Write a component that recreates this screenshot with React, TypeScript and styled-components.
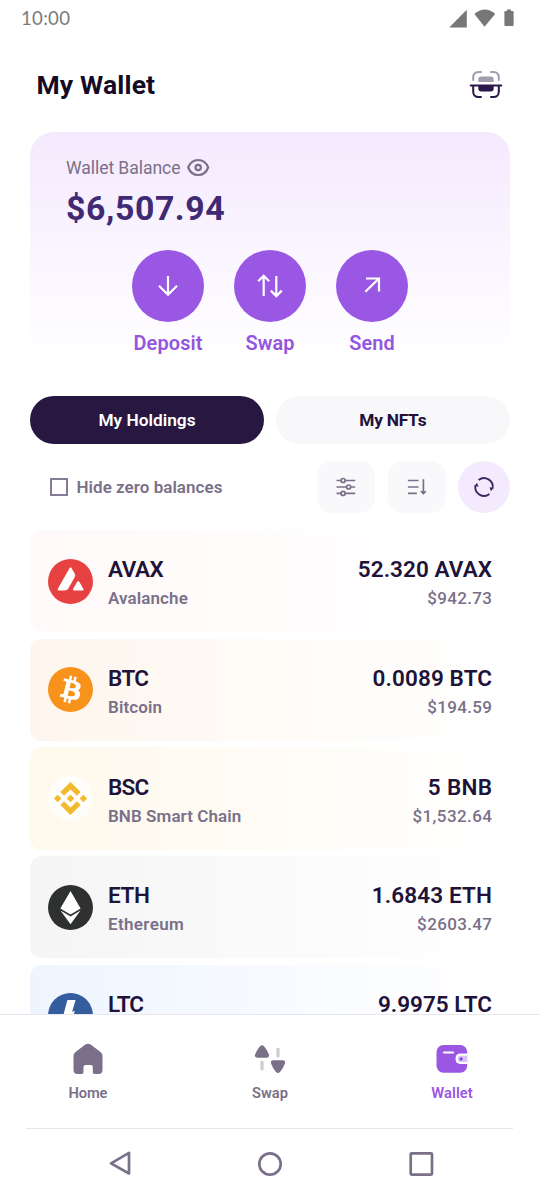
import React from "react";
import styled, { createGlobalStyle } from "styled-components";

const ink = "#201239";
const muted = "#7a7089";
const purple = "#9957e4";

const GlobalStyle = createGlobalStyle`
  * { box-sizing: border-box; }
  body { margin: 0; background: #fff; font-family: Roboto, "Liberation Sans", sans-serif; }
  button { font: inherit; border: 0; padding: 0; margin: 0; background: none; }
  svg { display: block; flex: none; overflow: visible; }
`;

const Text = styled.span<{ $size: number; $weight?: number; $color?: string; $track?: number; $line?: number }>`
  display: block;
  white-space: nowrap;
  font-size: ${(p) => p.$size}px;
  font-weight: ${(p) => p.$weight ?? 700};
  color: ${(p) => p.$color ?? ink};
  letter-spacing: ${(p) => p.$track ?? 0}px;
  margin-right: ${(p) => -(p.$track ?? 0)}px;
  line-height: ${(p) => p.$line ?? 28}px;
`;

const Screen = styled.div`
  width: 540px;
  height: 1200px;
  display: flex;
  flex-direction: column;
  overflow: hidden;
  background: #fff;
`;

const StatusBar = styled.div`
  height: 37px;
  flex: none;
  display: flex;
  justify-content: space-between;
  align-items: center;
  padding: 0 26px 0 21px;
`;

const Clock = styled.span`
  font-family: Lato, sans-serif;
  font-size: 18.6px;
  line-height: 37px;
  letter-spacing: 0.3px;
  color: #7b7b7b;
`;

const Header = styled.header`
  flex: none;
  height: 95px;
  display: flex;
  justify-content: space-between;
  align-items: center;
  padding: 0 37px 0 36.5px;
`;

const Title = styled(Text)`
  margin-top: 0;
  margin-bottom: 0;
`;

const Content = styled.main`
  flex: 1;
  min-height: 0;
  overflow: hidden;
  padding: 0 30px;
`;

const BalanceCard = styled.section`
  height: 240px;
  border-radius: 24px;
  background: linear-gradient(180deg, #f4e9fe 0%, #faf5ff 50%, #ffffff 98%);
  padding: 22px 36px 0;
`;

const BalanceLabel = styled.div`
  display: flex;
  align-items: center;
  gap: 5px;
`;

const Actions = styled.div`
  display: flex;
  justify-content: center;
  gap: 30px;
  margin-top: 14px;
`;

const Action = styled.div`
  width: 72px;
  display: flex;
  flex-direction: column;
  align-items: center;
  gap: 7.5px;
`;

const ActionCircle = styled.button`
  width: 72px;
  height: 72px;
  border-radius: 50%;
  background: ${purple};
`;

const Tabs = styled.div`
  display: flex;
  gap: 12px;
  margin-top: 24px;
`;

const Tab = styled.button<{ $active?: boolean }>`
  flex: 1;
  height: 48px;
  border-radius: 24px;
  display: flex;
  justify-content: center;
  align-items: center;
  background: ${(p) => (p.$active ? "#281740" : "#f8f8fb")};
`;

const Toolbar = styled.div`
  display: flex;
  align-items: center;
  gap: 12.5px;
  height: 52px;
  margin: 17px 0;
`;

const HideToggle = styled.label`
  flex: 1;
  display: flex;
  align-items: center;
  gap: 8.5px;
  padding-left: 20px;
`;

const Checkbox = styled.span`
  width: 18px;
  height: 18px;
  border: 2px solid #857b94;
`;

const ToolButton = styled.button<{ $round?: boolean }>`
  width: ${(p) => (p.$round ? 52 : 58)}px;
  height: 52px;
  border-radius: ${(p) => (p.$round ? "50%" : "15px")};
  background: ${(p) => (p.$round ? "#f3ebfd" : "#f9f9fb")};
`;

const HoldingList = styled.div`
  display: flex;
  flex-direction: column;
  gap: 6.5px;
`;

const HoldingRow = styled.div<{ $tint: string }>`
  height: 102.2px;
  flex: none;
  border-radius: 12px;
  background: linear-gradient(90deg, ${(p) => p.$tint} 0%, #ffffff 96%);
  display: flex;
  align-items: center;
  padding: 0 18px;
`;

const Names = styled.div`
  flex: 1;
  padding: 6.4px 0 0 15px;
`;

const Amounts = styled.div`
  padding-top: 6.4px;
  display: flex;
  flex-direction: column;
  align-items: flex-end;
`;

const BottomNav = styled.nav`
  flex: none;
  height: 114px;
  border-top: 1px solid #e8e7ee;
  display: flex;
  justify-content: space-between;
  padding: 25px 48px 0;
`;

const NavItem = styled.div`
  width: 80px;
  display: flex;
  flex-direction: column;
  align-items: center;
  gap: 1px;
`;

const SystemBar = styled.div`
  flex: none;
  height: 72px;
  margin: 0 27px 0 26px;
  border-top: 1px solid #e6e5e9;
  display: flex;
  justify-content: space-between;
  padding: 19px 79px 0 80px;
`;

const StatusIcons = () => (
  <svg width="66" height="20" viewBox="448 8.500 66 20" fill="#777">
    <path d="M466.8 9.3V27H449.2z" />
    <path d="M474.4 13.6C480.4 7.6 489.4 7.6 495.2 13.6L484.5 26.2z" />
    <path d="M507 9h4v1.4h1.6q1 0 1 1V24.6q0 1-1 1h-7.2q-1 0-1-1V11.4q0-1 1-1H507z" />
  </svg>
);

const ScanIcon = () => (
  <svg width="34" height="28" viewBox="469 70.600 34 28" fill="none" strokeWidth="2" strokeLinecap="round">
    <path d="M473.2 79.5V77q0-5.5 5.5-5.5h2.3M498.8 79.5V77q0-5.500-5.500-5.500H491" stroke="#a29caf" />
    <path d="M478.3 81.700V79q0-3 3-3h9.400q3 0 3 3v2.700z" fill="#a29caf" />
    <path d="M478.3 85V88q0 3 3 3h9.400q3 0 3-3V85z" fill="#2b1748" />
    <path d="M470.7 85.200h30.600M473.200 86V91q0 5.600 5.500 5.600h2.300M498.800 86V91q0 5.600-5.500 5.600H491" stroke="#2b1748" />
  </svg>
);

const EyeIcon = () => (
  <svg width="24" height="20" viewBox="186 158 24 20" fill="none" stroke={muted} strokeWidth="2.2">
    <path d="M188.2 167.5C190 163 193.8 160 198.2 160s8.200 3 10 7.500C206.400 172 202.600 175 198.200 175S190 172 188.200 167.500z" strokeLinejoin="round" />
    <circle cx="198.200" cy="167.500" r="2.700" />
  </svg>
);

const actionPaths: Record<string, string> = {
  Deposit: "M36 26v18.600M27 35.800l9 9 9-9",
  Swap: "M29.700 46V26M24.200 31.200L29.700 25.700l5.500 5.500M42.300 26v20M36.800 40.600l5.500 5.500 5.500-5.500",
  Send: "M30 28.500H43V41.500M42.800 28.700L29.300 41.800",
};

const ActionIcon = ({ name }: { name: string }) => (
  <svg width="72" height="72" viewBox="0 0 72 72" fill="none" stroke="#fff" strokeWidth="2.200">
    <path d={actionPaths[name]} />
  </svg>
);

const ToolSvg = styled.svg`
  margin: 0 auto;
`;

const FilterIcon = () => (
  <ToolSvg width="20" height="20" viewBox="0 0 20 20" fill="none" stroke={muted} strokeWidth="1.700">
    <path d="M.5 3.500H5M9.200 3.500H19.200M.5 10H10.500M14.700 10h4.500M.5 16.400H5M9.200 16.400H19.200" />
    <circle cx="7.100" cy="3.500" r="2" />
    <circle cx="12.600" cy="10" r="2" />
    <circle cx="7.100" cy="16.400" r="2" />
  </ToolSvg>
);

const SortIcon = () => (
  <ToolSvg width="20" height="20" viewBox="0 0 20 20" fill="none" stroke={muted} strokeWidth="1.700">
    <path d="M.9 3.500h10.600M.9 10h10.600M.9 16.400H9.900M16.400 2.300V15" />
    <path d="M13.700 14.500h5.400L16.400 17.400z" fill={muted} strokeWidth="0.800" strokeLinejoin="round" />
  </ToolSvg>
);

const RefreshIcon = () => (
  <ToolSvg width="20" height="20" viewBox="0 0 20 20" fill="none" stroke="#3d2765" strokeWidth="1.900">
    <path d="M4.600 3.100A8.700 8.700 0 0 1 18.600 11.500M15.400 16.900A8.700 8.700 0 0 1 1.400 8.500" />
    <path d="M15.400 10.200l4.100.9-2.500 3.200zM4.600 9.800L.5 8.900 3 5.700z" fill="#3d2765" stroke="none" />
  </ToolSvg>
);

const AvaxLogo = () => (
  <svg width="45" height="45" viewBox="0 0 1503 1503">
    <circle cx="751.500" cy="751.500" r="751.500" fill="#e84142" />
    <path
      fill="#fff"
      d="M538.688 1050.86H392.94C362.314 1050.86 347.186 1050.86 337.962 1044.96C327.999 1038.5 321.911 1027.8 321.173 1015.99C320.619 1005.11 328.184 991.822 343.312 965.255L703.182 330.935C718.495 303.999 726.243 290.531 736.021 285.55C746.537 280.2 759.083 280.2 769.599 285.55C779.377 290.531 787.126 303.999 802.438 330.935L876.42 460.079L876.797 460.738C893.336 489.635 901.723 504.289 905.385 519.669C909.443 536.458 909.443 554.169 905.385 570.958C901.695 586.455 893.393 601.215 876.604 630.549L687.573 964.702L687.084 965.558C670.436 994.693 661.999 1009.46 650.306 1020.6C637.576 1032.78 622.263 1041.63 605.474 1046.62C590.161 1050.86 573.004 1050.86 538.688 1050.86ZM906.75 1050.86H1115.59C1146.4 1050.86 1161.9 1050.86 1171.13 1044.78C1181.09 1038.32 1187.36 1027.43 1187.92 1015.63C1188.45 1005.1 1181.05 992.33 1166.55 967.307L1165.04 964.706L1060.43 785.75L1059.24 783.735C1044.54 758.877 1037.12 746.324 1027.59 741.472C1017.08 736.121 1004.71 736.121 994.199 741.472C984.605 746.453 976.857 759.552 961.544 785.934L857.306 964.891L856.949 965.507C841.69 991.847 834.064 1005.01 834.614 1015.81C835.352 1027.62 841.44 1038.5 851.402 1044.96C860.443 1050.86 875.94 1050.86 906.75 1050.86Z"
    />
  </svg>
);

const BtcLogo = () => (
  <svg width="45" height="45" viewBox="0 0 32 32">
    <circle cx="16" cy="16" r="16" fill="#f7931a" />
    <path
      fill="#fff"
      d="M23.189 14.02c.314-2.096-1.283-3.223-3.465-3.975l.708-2.84-1.728-.43-.69 2.765c-.454-.114-.92-.22-1.385-.326l.695-2.783L15.596 6l-.708 2.839c-.376-.086-.746-.17-1.104-.26l.002-.009-2.384-.595-.46 1.846s1.283.294 1.256.312c.7.175.826.638.805 1.006l-.806 3.235c.048.012.11.03.18.057l-.183-.045-1.13 4.532c-.086.212-.303.531-.793.41.018.025-1.256-.313-1.256-.313l-.858 1.978 2.25.561c.418.105.828.215 1.231.318l-.715 2.872 1.727.43.708-2.84c.472.127.93.245 1.378.357l-.706 2.828 1.728.43.715-2.866c2.948.558 5.164.333 6.097-2.333.752-2.146-.037-3.385-1.588-4.192 1.13-.26 1.98-1.003 2.207-2.538zm-3.95 5.538c-.533 2.147-4.148.986-5.32.695l.95-3.805c1.172.293 4.929.872 4.37 3.11zm.535-5.569c-.487 1.953-3.495.96-4.47.717l.86-3.45c.975.243 4.118.696 3.61 2.733z"
    />
  </svg>
);

const BnbLogo = () => (
  <svg width="45" height="45" viewBox="0 0 32 32">
    <circle cx="16" cy="16" r="16" fill="#fffefb" />
    <path
      fill="#f3ba2f"
      transform="translate(-2.880 -2.880) scale(1.180)"
      d="M12.116 14.404L16 10.520l3.886 3.886 2.260-2.260L16 6l-6.144 6.144 2.260 2.260zM6 16l2.260-2.260L10.520 16l-2.260 2.260L6 16zm6.116 1.596L16 21.480l3.886-3.886 2.260 2.259L16 26l-6.144-6.144-.003-.003 2.263-2.257zM21.480 16l2.260-2.260L26 16l-2.260 2.260L21.480 16zM18.294 16L16 18.294 13.705 16 16 13.706z"
    />
  </svg>
);

const EthLogo = () => (
  <svg width="45" height="45" viewBox="0 0 45 45">
    <circle cx="22.500" cy="22.500" r="22.500" fill="#2f3030" />
    <path fill="#fff" d="M22.500 6L32.600 23.400 22.500 29.500 12.300 23.400zM12.500 25.400L22.500 31.500 32.500 25.400 22.500 39.300z" />
  </svg>
);

const LtcLogo = () => (
  <svg width="45" height="45" viewBox="0 0 32 32">
    <circle cx="16" cy="16" r="16" fill="#345d9d" />
    <path
      fill="#fff"
      transform="translate(-4.300 -5.800) scale(1.350)"
      d="M10.427 19.214L9 19.768l.688-2.759 1.444-.58L13.413 8h4.300l-1.819 6.196 1.410-.571-.68 2.750-1.427.571-.848 3.483H23L22.127 24H9.252z"
    />
  </svg>
);

const HomeIcon = () => (
  <svg width="40" height="38" viewBox="68.500 1040 40 38" fill={muted}>
    <path d="M85.500 1044.800q3-2.200 6 0l9.500 7.200q2 1.600 2 4V1070q0 4-4 4H95q-1.700 0-1.700-1.700V1067q0-2-2-2H86q-2 0-2 2v5.300q0 1.700-1.700 1.700H78q-4 0-4-4v-14q0-2.400 2-4z" />
  </svg>
);

const SwapNavIcon = () => (
  <svg width="40" height="38" viewBox="250 1040 40 38" fill={muted}>
    <path d="M259.800 1046.600q2.200-2.600 4.400 0 3 3.400 4.700 8 .8 3-2.200 3.100h-9.400q-3-.1-2.200-3.100 1.700-4.600 4.700-8z" />
    <path d="M275.800 1071.700q2.200 2.400 4.400 0 3-3.400 4.700-8.300.8-3-2.200-3.100h-9.400q-3 .1-2.200 3.100 1.700 4.900 4.700 8.300z" />
    <path d="M262 1062V1069M278 1049V1056" stroke="#cfcbd5" strokeWidth="3.200" strokeLinecap="round" />
  </svg>
);

const WalletIcon = () => (
  <svg width="40" height="38" viewBox="431.500 1040 40 38">
    <rect x="436" y="1045" width="30.700" height="27.700" rx="7" fill={purple} />
    <path d="M443.500 1052.500h9" stroke="#fff" strokeWidth="2.200" strokeLinecap="round" />
    <path d="M467 1053.600h-7q-5 0-5 5.200t5 5.200h7z" fill="#fff" />
    <path d="M466.700 1055.700h-6.200q-3.200 0-3.200 3.200t3.200 3.200h6.200z" fill="#d9c2f6" />
    <circle cx="460.600" cy="1058.900" r="1.600" fill="#8443d4" />
  </svg>
);

const sysProps = { width: 26, height: 32, fill: "none", stroke: muted, strokeWidth: 2.7 };

const holdings = [
  { logo: <AvaxLogo />, code: "AVAX", name: "Avalanche", amount: "52.320 AVAX", value: "$942.73", tint: "#fff9f9", tracks: [-0.45, 0.1, 0.08, 0.35] },
  { logo: <BtcLogo />, code: "BTC", name: "Bitcoin", amount: "0.0089 BTC", value: "$194.59", tint: "#fef6ee", tracks: [-0.6, 0.1, 0.1, 0.35] },
  { logo: <BnbLogo />, code: "BSC", name: "BNB Smart Chain", amount: "5 BNB", value: "$1,532.64", tint: "#fff9ec", tracks: [-0.8, 0.07, 0.3, 0.42] },
  { logo: <EthLogo />, code: "ETH", name: "Ethereum", amount: "1.6843 ETH", value: "$2603.47", tint: "#f5f5f5", tracks: [-0.4, 0.35, 0.15, 0.36] },
  { logo: <LtcLogo />, code: "LTC", name: "Litecoin", amount: "9.9975 LTC", value: "$538.21", tint: "#eef5ff", tracks: [-0.9, 0.1, 0, 0.35] },
];

export default function App() {
  return (
    <Screen>
      <GlobalStyle />
      <StatusBar>
        <Clock>10:00</Clock>
        <StatusIcons />
      </StatusBar>
      <Header>
        <Title as="h1" $size={26.5} $track={0.15} $color="#130c24">My Wallet</Title>
        <ScanIcon />
      </Header>
      <Content>
        <BalanceCard>
          <BalanceLabel>
            <Text $size={17.6} $weight={400} $track={-0.08} $color={muted}>Wallet Balance</Text>
            <EyeIcon />
          </BalanceLabel>
          <Text $size={33.8} $line={54} $track={0.6} $color="#402a73">$6,507.94</Text>
          <Actions>
            {["Deposit", "Swap", "Send"].map((name) => (
              <Action key={name}>
                <ActionCircle><ActionIcon name={name} /></ActionCircle>
                <Text $size={19.9} $weight={600} $track={0.15} $color="#9455df">{name}</Text>
              </Action>
            ))}
          </Actions>
        </BalanceCard>
        <Tabs>
          <Tab $active><Text $size={17.3} $weight={600} $color="#fff">My Holdings</Text></Tab>
          <Tab><Text $size={17.3} $track={-0.25}>My NFTs</Text></Tab>
        </Tabs>
        <Toolbar>
          <HideToggle>
            <Checkbox />
            <Text $size={17} $weight={600} $track={0.04} $color={muted}>Hide zero balances</Text>
          </HideToggle>
          <ToolButton><FilterIcon /></ToolButton>
          <ToolButton><SortIcon /></ToolButton>
          <ToolButton $round><RefreshIcon /></ToolButton>
        </Toolbar>
        <HoldingList>
          {holdings.map((h) => (
            <HoldingRow key={h.code} $tint={h.tint}>
              {h.logo}
              <Names>
                <Text $size={22.5} $weight={600} $track={h.tracks[0]}>{h.code}</Text>
                <Text $size={17} $weight={600} $track={h.tracks[1]} $line={30} $color={muted}>{h.name}</Text>
              </Names>
              <Amounts>
                <Text $size={22.5} $weight={600} $track={h.tracks[2]}>{h.amount}</Text>
                <Text $size={17} $weight={500} $track={h.tracks[3]} $line={30} $color={muted}>{h.value}</Text>
              </Amounts>
            </HoldingRow>
          ))}
        </HoldingList>
      </Content>
      <BottomNav>
        <NavItem><HomeIcon /><Text $size={14.7} $weight={600} $track={-0.15} $color={muted}>Home</Text></NavItem>
        <NavItem><SwapNavIcon /><Text $size={14.7} $weight={600} $color={muted}>Swap</Text></NavItem>
        <NavItem><WalletIcon /><Text $size={14.7} $weight={600} $track={0.1} $color={purple}>Wallet</Text></NavItem>
      </BottomNav>
      <SystemBar>
        <svg {...sysProps} viewBox="106 1148 26 32" strokeLinejoin="round">
          <path d="M129 1152.800V1173.500L111 1163.300z" />
        </svg>
        <svg {...sysProps} viewBox="257 1148 26 32"><circle cx="270" cy="1164" r="10.700" /></svg>
        <svg {...sysProps} viewBox="408 1148 26 32"><rect x="410.700" y="1153.300" width="21.300" height="21.300" rx="1" /></svg>
      </SystemBar>
    </Screen>
  );
}
